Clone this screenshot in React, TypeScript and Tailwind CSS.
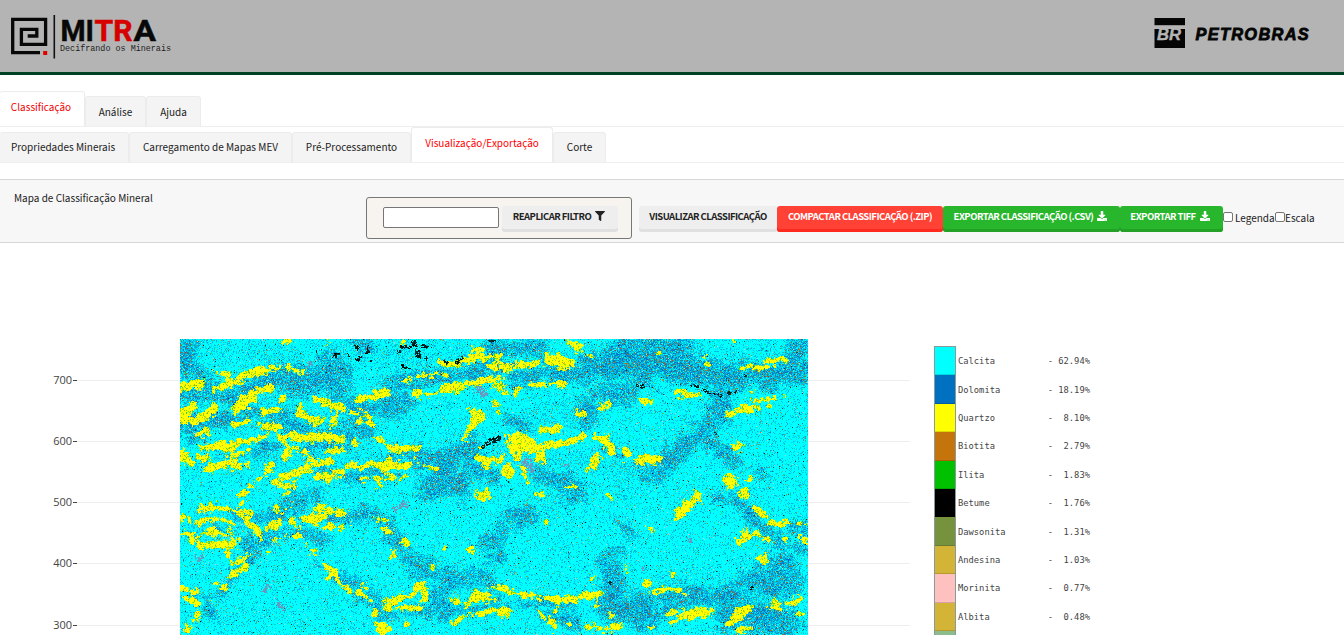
import { useEffect, useRef } from "react";
import type { ReactNode } from "react";
import { FaDownload, FaFilter } from "react-icons/fa";

const MAP_W = 628;
const MAP_H = 296;

/* Strokes are flat x, y, radius triples on a grid three times finer than the map. */
type Stroke = number[];
type Layer = { west: Stroke[]; east: Stroke[] };

const quartz: Layer = {
  west: [
    [545,165,12,600,160,12],[650,130,10,685,127,10],[640,178,6,700,152,11,760,125,12,830,112,9],[860,108,4,905,126,5],
    [710,235,14,745,205,18,775,178,10,815,175,4],[550,250,22,580,225,8],[550,265,14,590,270,12,635,240,14,640,218,6],
    [600,308,8,625,305,6],[775,287,8,835,288,10],[790,245,8,830,242,6],[900,230,10,900,255,5,945,270,11,970,265,6],
    [990,285,5,1005,262,8],[845,205,6],[945,208,9,990,220,9,1040,235,5,1105,258,4],[1075,208,9,1120,200,10,1160,185,9],
    [1070,270,5,1120,285,4],[695,280,6,740,275,9],[840,318,9,900,322,12,960,322,14,1025,322,11],
    [605,350,8,650,350,12,690,350,20,740,330,6,800,320,5],[680,375,8,740,360,6],[545,370,13,565,395,12],[590,382,10,620,380,8],
    [620,415,8,665,405,11,740,398,5],[845,320,6,860,350,6,860,372,12],[880,350,4,925,375,6,920,415,14,880,430,7,830,440,5],
    [810,400,10,805,430,6],[820,455,12,850,472,5,880,465,6,885,440,4,850,440,3],[720,490,8,740,475,2,770,445,2,800,438,2],
    [740,480,2,720,530,1],[865,490,7],[955,440,9,980,440,14,1030,425,7],[930,400,10,1000,390,8],[980,365,8,1025,358,8],
    [1040,405,5,1060,405,14,1080,410,5],[1105,400,10,1160,405,17,1215,405,7,1245,385,3],[1215,385,2,1305,415,2],
    [1170,355,8,1250,350,5],[1060,340,8],[1120,320,6,1140,332,6],[1090,445,5,1140,445,5,1215,440,4],[1135,462,9],
    [1250,190,8,1285,190,5],[1310,185,6,1360,170,14,1420,155,7,1500,145,6],[1210,150,1,1290,132,6,1340,128,4],
    [1320,95,7,1370,100,8,1430,80,12,1500,78,4],[1397,320,7,1415,285,10,1435,260,20,1405,230,4],[1485,170,12],[1490,225,11],
    [1440,345,4],[1430,380,6,1460,395,14,1500,385,9],[1430,485,5,1450,495,17],[860,32,8],[980,35,6],[1215,33,7],
    [1420,60,5,1450,60,4],[605,535,9,650,530,7,700,540,7,745,550,12],[550,560,8,580,580,6,640,560,5,665,570,8],
    [550,612,3,620,600,4,680,615,4],[600,575,2,590,620,2],[690,580,4,695,620,3],[560,600,2,580,635,4],[640,590,3,650,630,4],
    [605,645,11,650,640,14,700,640,15],[680,665,9],[740,580,8,770,600,9,780,625,5],[800,590,6,830,580,14],[830,540,9],
    [875,570,6,890,590,4],[910,565,7,940,565,16,975,560,4],[800,640,3,800,665,3],[820,630,5,860,612,2,900,618,3],
    [905,640,5,940,665,4],[700,700,5,750,675,3],[690,735,7,735,710,10],[650,760,7,670,770,8],[645,810,3],
    [950,530,8,1030,550,5],[980,592,9,1020,590,5],[1050,583,5],[545,775,9,590,785,4],[555,805,8,585,815,12],
    [595,850,6,575,880,5,560,905,7],[965,700,4,1000,725,5,1020,760,7,1045,778,4],[980,740,4,1000,745,3],
    [1070,785,5,1110,805,3],[1090,765,6],[1150,595,6,1175,605,6],[1215,635,10],[1180,675,10],[1295,708,4],[1410,652,7],[1330,650,4],
    [1160,825,14,1180,805,10,1230,800,4,1260,765,12,1275,800,7,1250,830,7,1190,830,4],[1125,845,7],
    [1130,880,6,1145,895,15,1170,895,5],[1220,885,4],[1340,800,2,1400,820,7,1430,800,18,1480,805,6],
    [1420,855,7,1480,840,9],[1355,880,5,1400,855,3],[1490,775,5],[850,540,2,875,515,2],[1120,563,1,1160,572,1],
  ],
  east: [
    [0,110,8,60,115,9,110,100,11,150,95,5],[0,100,2,60,98,2],[170,95,12,210,95,20,240,95,12],[170,75,5,185,95,8],[265,55,12,235,35,6],
    [300,80,7],[0,140,6,30,170,13,40,185,8],[75,185,7,110,165,1,165,160,6,230,158,4],[15,215,8,25,240,5],[265,250,12],
    [335,228,6,355,222,4],[460,212,9,480,210,8],[560,190,8,620,195,4],[715,250,11,750,235,11,800,235,6],[785,185,9],
    [790,215,1,840,205,1,885,200,2],[640,80,6],[648,103,6],[735,32,6],[825,95,6,880,85,6],[750,113,4,800,112,5,870,105,1],
    [505,65,6],[60,325,16,100,320,16,120,345,18,70,350,18],[90,375,12],[150,385,12,155,350,5,190,340,11,235,335,11,285,315,3],
    [150,300,5,200,295,9],[50,425,18],[15,385,8],[110,450,5,95,410,3],[320,320,5,345,325,13,365,360,9],[410,362,12],
    [440,390,7,490,390,11,510,375,4],[310,400,14,320,375,8,290,420,3],[235,470,9],[148,490,7],[400,405,5],[738,350,13],
    [718,452,20],[760,490,15],[780,450,6],[565,550,14,600,515,10,620,495,8,635,520,3],[795,535,5,845,575,7,870,582,3,925,575,5],
    [950,580,5],[760,595,6,755,620,6,800,610,9,845,635,4],[740,635,4,790,620,4],[940,625,9],[885,625,4],[818,685,14],[170,580,6],
    [480,595,5],[410,717,5],[545,730,5],[500,557,4],[0,770,4,50,780,7,100,795,7,145,805,3],[165,805,5,210,805,11,260,805,9,325,785,9],
    [305,745,7],[20,850,7,50,848,15],[150,850,4,180,875,7,195,885,9],[195,840,7],[470,765,12],[480,780,2,560,775,8,590,795,2],
    [535,850,4,575,835,2],[570,860,7,620,845,17,655,845,12],[540,875,3,580,860,4],[360,855,8],[290,890,4,345,898,6,390,882,8],
    [480,893,5],[720,880,7,750,850,17,775,830,7],[740,898,10,780,890,3],[850,815,5,870,835,4,830,830,2],[885,820,5,920,812,10],
    [930,850,5],[320,825,5],[835,230,3],[360,498,3],[220,860,2,235,880,2],
  ],
};

const dolomite: Layer = {
  west: [
    [555,50,26,560,100,26,600,140,16],[600,150,16,700,185,16,800,150,30,900,150,40,1000,150,44],[980,105,30,1010,130,30],
    [545,200,14,680,195,18,760,245,16],[545,290,16,640,270,24,700,270,14],[780,270,12,860,270,25,920,290,18],[1040,215,15,1110,235,24,1200,215,34],
    [1040,290,10,1100,300,22],[1180,160,20,1260,150,18,1350,140,18,1440,120,18,1500,110,26],[930,300,8,1050,310,14],[940,345,10,1020,345,8],
    [1260,380,30,1330,400,42,1390,360,32,1430,420,24],[1290,470,34,1380,460,30],[1480,440,15],[1400,350,24],[840,545,8,900,520,24],[940,490,12],
    [980,560,10,1100,555,13,1160,580,13,1190,640,18,1230,690,22,1290,730,25,1360,750,32,1440,740,24,1490,770,15],
    [1310,790,36,1330,840,22],[1130,850,8,1250,845,10,1400,840,12,1500,820,10],[650,800,6,720,720,7,780,640,13,840,608,8,900,605,9,960,625,12],
    [950,700,3,1060,770,8,1130,820,10],[700,545,6,780,565,8,860,545,6],[740,640,14],[630,850,14],[590,795,6,650,800,7],
    [1470,680,20],[700,390,4,740,370,5,830,335,5],[545,325,6,600,325,6],[960,435,5,1100,430,6,1210,428,5],[1180,375,5,1260,365,8],[870,480,4,880,520,5],
    [1390,120,10,1480,90,10],[640,600,10],[1060,30,5,1100,45,10],
  ],
  east: [
    [0,60,28,60,60,26,150,50,16],[300,110,24,400,90,54,500,90,54,600,110,38,700,140,36,800,140,26,950,120,36],[400,40,24,560,50,30],
    [920,50,32,920,110,26],[60,140,20,150,130,16,280,130,20],[400,190,26,330,190,22,290,220,16,280,270,16],[60,270,15,100,290,10],
    [690,190,24,690,260,24,640,300,22,580,340,26,540,380,24,490,430,20],[650,340,20,700,370,12,750,390,12],
    [130,420,14,200,450,22,270,480,18,240,520,8],[110,560,26,60,550,8],[0,640,26],[30,600,10],[820,440,10],
    [690,500,12,760,520,13,790,580,15,850,610,13,880,650,13],[360,690,24,370,760,32,360,830,40,450,830,36],
    [0,815,5,100,820,8,250,825,6],[480,800,15,700,800,22,750,760,24,800,740,34,880,700,28,900,760,30,850,780,30],
    [700,850,30,780,850,30,900,870,34],[450,870,28,540,840,10],[950,590,13,860,595,8],[170,850,8,260,880,14],[0,450,8],
    [330,360,8,400,385,6,460,405,6],[380,580,4,420,600,2],[770,560,16],[930,650,10],[680,890,14,900,895,14],[40,100,10,280,140,12],
  ],
};

const haze: Layer = {
  west: [[560,60,50,760,60,50,900,90,50],[1000,60,60,1200,80,60,1400,60,50],[560,260,70,800,240,70,1000,260,60,1180,250,40],[600,600,60,750,580,60,880,580,40],[600,400,50,700,380,60,1000,380,60,1200,400,50],[1420,490,60,1330,420,70],[1000,700,40]],
  east: [[0,130,60,250,110,70,450,110,80,900,110,70],[120,270,60,300,240,60],[50,350,60,150,400,60,300,400,60,450,420,50,620,320,50],[60,580,70,200,500,60],[400,470,60],[820,600,60,740,500,40],[360,780,70,800,820,90],[400,600,40]],
};

const grey: Layer = {
  west: [[600,683,10],[927,105,9],[1435,175,9,1448,195,11],[1190,530,8,1212,522,9],[800,765,4,798,785,10],[835,820,5,848,838,7],[675,740,5],[820,750,3],[1150,275,4]],
  east: [[105,395,16,120,420,12],[460,712,7],[593,628,7],[222,403,5]],
};

const bitumen: Layer = {
  west: [
    [1003,77,5,1015,70,3],[1045,70,4],[1068,50,6],[1075,82,5],[1100,48,4,1103,62,5],[1130,42,3],[1193,62,8],[1205,50,4,1230,52,6],[1240,35,9,1250,60,8,1255,75,8],
    [1270,45,9,1282,50,5],[1278,82,4],[1205,110,4,1230,114,4],[1478,32,6],[1330,90,4,1340,95,4],[1370,98,5,1385,82,6],[1445,347,4,1475,330,9,1495,325,9],[950,60,3],[1110,95,3],[1335,120,3],
  ],
  east: [[0,32,7,15,32,4],[0,330,9,25,320,5],[430,168,2,455,170,4],[560,165,2],[600,165,1,630,170,3,655,188,3,690,195,3,745,183,2],[768,137,5],[360,758,3],[785,770,3],[675,312,3]],
};

function hash(x: number, y: number, seed: number) {
  let h = Math.imul(x, 374761393) ^ Math.imul(y, 668265263) ^ Math.imul(seed, 2246822519);
  h = Math.imul(h ^ (h >>> 13), 1274126177);
  h = Math.imul(h ^ (h >>> 15), 2654435761);
  return ((h ^ (h >>> 16)) >>> 0) / 4294967296;
}

function smoothNoise(x: number, y: number, seed: number) {
  const ix = Math.floor(x);
  const iy = Math.floor(y);
  const fx = x - ix;
  const fy = y - iy;
  const u = fx * fx * (3 - 2 * fx);
  const v = fy * fy * (3 - 2 * fy);
  const a = hash(ix, iy, seed) * (1 - u) + hash(ix + 1, iy, seed) * u;
  const b = hash(ix, iy + 1, seed) * (1 - u) + hash(ix + 1, iy + 1, seed) * u;
  return a * (1 - v) + b * v - 0.5;
}

/* Signed depth in pixels inside the layer's strokes; negative outside. */
function depthField(layer: Layer) {
  const field = new Float32Array(MAP_W * MAP_H).fill(-99);
  const strokes: [Stroke, number][] = [
    ...layer.west.map((s): [Stroke, number] => [s, -540]),
    ...layer.east.map((s): [Stroke, number] => [s, 930]),
  ];
  for (const [s, shift] of strokes) {
    for (let i = 0; i < s.length; i += 3) {
      const j = i + 3 < s.length ? i + 3 : i;
      if (j === i && s.length > 3) break;
      const ax = (s[i] + shift) / 3, ay = (s[i + 1] - 27) / 3, ar = s[i + 2] / 3;
      const bx = (s[j] + shift) / 3, by = (s[j + 1] - 27) / 3, br = s[j + 2] / 3;
      const pad = Math.max(ar, br) + 18;
      const dx = bx - ax, dy = by - ay, len = dx * dx + dy * dy || 1;
      const x0 = Math.max(0, Math.floor(Math.min(ax, bx) - pad)), x1 = Math.min(MAP_W - 1, Math.ceil(Math.max(ax, bx) + pad));
      const y0 = Math.max(0, Math.floor(Math.min(ay, by) - pad)), y1 = Math.min(MAP_H - 1, Math.ceil(Math.max(ay, by) + pad));
      for (let y = y0; y <= y1; y++) {
        for (let x = x0; x <= x1; x++) {
          const t = Math.min(1, Math.max(0, ((x - ax) * dx + (y - ay) * dy) / len));
          const d = ar + (br - ar) * t - Math.hypot(x - ax - dx * t, y - ay - dy * t);
          const k = y * MAP_W + x;
          if (d > field[k]) field[k] = d;
        }
      }
    }
  }
  return field;
}

type Rgb = [number, number, number];
const CYAN: Rgb = [0, 255, 255];
const BLUE: Rgb = [0, 112, 192];
const YELLOW: Rgb = [255, 255, 0];
const BROWN: Rgb = [197, 116, 12];
const GREEN: Rgb = [0, 192, 0];
const BLACK: Rgb = [0, 0, 0];
const GREY: Rgb = [122, 140, 184];
const PINK: Rgb = [255, 192, 192];
const OLIVE: Rgb = [118, 146, 60];

function paintMap(ctx: CanvasRenderingContext2D) {
  const q = depthField(quartz);
  const d = depthField(dolomite);
  const hz = depthField(haze);
  const g = depthField(grey);
  const b = depthField(bitumen);
  const image = ctx.createImageData(MAP_W, MAP_H);
  const put = (k: number, base: Rgb, c: Rgb, mix: number) => {
    for (let i = 0; i < 3; i++) image.data[k * 4 + i] = base[i] + (c[i] - base[i]) * mix;
    image.data[k * 4 + 3] = 255;
  };
  for (let y = 0; y < MAP_H; y++) {
    for (let x = 0; x < MAP_W; x++) {
      const k = y * MAP_W + x;
      const n = smoothNoise(x / 6, y / 5, 1) * 4.5 + smoothNoise(x / 3, y / 3, 2) * 5 + smoothNoise(x / 1.4, y / 1.4, 3) * 3.5;
      const wide = smoothNoise(x / 14, y / 10, 4) * 10 + smoothNoise(x / 5, y / 4, 5) * 9;
      const blue = Math.min(1, Math.max(0, (d[k] + wide + 8) / 14));
      const hazy = Math.min(1, Math.max(0, (hz[k] + wide) / 18));
      const r = hash(x, y, 6);
      const r2 = hash(x, y, 7);
      if (b[k] + n * 0.6 > 0.2 && r < 0.8) put(k, CYAN, BLACK, 0.75 + r2 * 0.25);
      else if (q[k] + n > -0.45) {
        const rim = q[k] + n < 0.9 ? 0.14 : 0;
        if (r < 0.8 - rim) put(k, YELLOW, YELLOW, 1);
        else put(k, YELLOW, r < 0.9 ? GREEN : r < 0.94 ? BROWN : r < 0.96 ? CYAN : OLIVE, 0.25 + r2 * 0.5);
      } else if (g[k] + n > 0 && r < 0.78) put(k, CYAN, GREY, 0.75 + r2 * 0.25);
      else {
        const pBlue = 0.18 + hazy * 0.15 + blue * 0.42;
        const pBrown = 0.01 + hazy * 0.015 + blue * 0.085;
        if (r < pBlue) put(k, CYAN, BLUE, 0.15 + r2 * (0.5 + blue * 0.4));
        else if (r < pBlue + pBrown) put(k, blue > 0.4 ? BLUE : CYAN, BROWN, 0.4 + r2 * 0.5);
        else if (r < pBlue + pBrown + 0.01) put(k, CYAN, BLACK, 0.4 + r2 * 0.5);
        else if (r < pBlue + pBrown + 0.018) put(k, CYAN, PINK, 0.7);
        else if (r < pBlue + pBrown + 0.035) put(k, CYAN, GREEN, 0.45);
        else if (blue > 0.4 && r2 > 0.5) put(k, CYAN, BLUE, 0.4);
        else put(k, CYAN, CYAN, 1);
      }
    }
  }
  ctx.putImageData(image, 0, 0);
}

function MineralMap() {
  const ref = useRef<HTMLCanvasElement>(null);
  useEffect(() => {
    const ctx = ref.current?.getContext("2d");
    if (ctx) paintMap(ctx);
  }, []);
  return <canvas ref={ref} width={628} height={296} className="block h-[296px] w-[628px] shrink-0" />;
}

function MitraLogo() {
  return (
    <svg width="170" height="50" viewBox="0 0 170 50" className="block">
      <path d="M29 38.7H1.7V5.3H34.6V30.3H10.4V15.3H25.8V22H16.7" fill="none" stroke="#080808" strokeWidth="3.3" />
      <rect x="32.2" y="37" width="4" height="4" fill="#e00000" />
      <path d="M43.3 1V44.5" stroke="#111" strokeWidth="1.6" />
      <g fontFamily="Roboto" fontWeight="700" fontSize="30" strokeWidth="0.5">
        <text x="49.5" y="27.2" fill="#080808" stroke="#080808" textLength="33.5" lengthAdjust="spacingAndGlyphs">MI</text>
        <text x="83.5" y="27.2" fill="#d60000" stroke="#d60000" textLength="38" lengthAdjust="spacingAndGlyphs">TR</text>
        <text x="122.5" y="27.2" fill="#080808" stroke="#080808" textLength="22.5" lengthAdjust="spacingAndGlyphs">A</text>
      </g>
      <text x="49" y="37.3" fontFamily="Liberation Mono" fontSize="9" fill="#222" textLength="111" lengthAdjust="spacingAndGlyphs">
        Decifrando os Minerais
      </text>
    </svg>
  );
}

function PetrobrasLogo() {
  return (
    <svg width="160" height="32" viewBox="0 0 160 32" className="block">
      <rect x="0.5" y="1" width="30.5" height="7.2" fill="#050505" />
      <rect x="0.5" y="12" width="30.5" height="19" fill="#050505" />
      <text x="3" y="23.2" fontFamily="Liberation Sans" fontWeight="700" fontStyle="italic" fontSize="16" fill="#b4b4b4" stroke="#b4b4b4" strokeWidth="0.4" textLength="24" lengthAdjust="spacingAndGlyphs">BR</text>
      <text x="41.5" y="22.9" fontFamily="Liberation Sans" fontWeight="700" fontStyle="italic" fontSize="16.2" letterSpacing="1.3" fill="#050505" stroke="#050505" strokeWidth="0.8" textLength="114.5" lengthAdjust="spacingAndGlyphs">PETROBRAS</text>
    </svg>
  );
}

function Tab({ children, className }: { children: ReactNode; className: string }) {
  return <div className={`flex shrink-0 items-center justify-center rounded-t-[3px] border border-b-0 border-[#ececec] whitespace-nowrap ${className}`}>{children}</div>;
}

function ActionButton({ children, className }: { children: ReactNode; className: string }) {
  return (
    <button className={`flex h-[26px] shrink-0 items-center justify-center gap-[4px] rounded-[3px] pb-[6px] text-[9.5px] font-bold tracking-[-0.53px] whitespace-nowrap ${className}`}>
      {children}
    </button>
  );
}

const legend: { name: string; share: string; color: string }[] = [
  { name: "Calcita", share: "62.94%", color: "bg-[#00ffff]" },
  { name: "Dolomita", share: "18.19%", color: "bg-[#0070c0]" },
  { name: "Quartzo", share: "8.10%", color: "bg-[#ffff00]" },
  { name: "Biotita", share: "2.79%", color: "bg-[#c5740c]" },
  { name: "Ilita", share: "1.83%", color: "bg-[#00c000]" },
  { name: "Betume", share: "1.76%", color: "bg-[#000000]" },
  { name: "Dawsonita", share: "1.31%", color: "bg-[#76923c]" },
  { name: "Andesina", share: "1.03%", color: "bg-[#d4b436]" },
  { name: "Morinita", share: "0.77%", color: "bg-[#ffc0c0]" },
  { name: "Albita", share: "0.48%", color: "bg-[#d4b436]" },
  { name: "", share: "", color: "bg-[#8cbc8c]" },
];

function AxisLines() {
  return (
    <div className="flex h-full flex-col pt-[41px]">
      {[700, 600, 500, 400, 300].map((tick) => (
        <div key={tick} className="h-[61.13px] shrink-0 border-t border-[#eee]" />
      ))}
    </div>
  );
}

export default function App() {
  return (
    <div className="flex h-[635px] w-full flex-col overflow-hidden bg-white font-['Noto_Sans_CJK_SC','Noto_Sans',sans-serif] text-[10px] leading-4 tracking-normal text-[#222]">
      <header className="flex h-[75px] shrink-0 items-start justify-between border-b-[3px] border-[#004225] bg-[#b4b4b4] pr-[30px] pl-[11px]">
        <div className="pt-[14px]"><MitraLogo /></div>
        <div className="pt-[17px]"><PetrobrasLogo /></div>
      </header>

      <nav className="flex h-[52px] shrink-0 items-end border-b border-[#eee]">
        <Tab className="h-[35px] w-[85px] border-l-0 bg-white pr-[2px] pb-[5px] text-[#f00000]">Classificação</Tab>
        <Tab className="h-[30px] w-[61px] bg-[#f4f4f4]">Análise</Tab>
        <Tab className="h-[30px] w-[55px] bg-[#f4f4f4]">Ajuda</Tab>
      </nav>
      <nav className="flex h-[36px] shrink-0 items-end border-b border-[#eee]">
        <Tab className="h-[30px] w-[129px] border-l-0 bg-[#f4f4f4] pr-[2px] pb-px">Propriedades Minerais</Tab>
        <Tab className="h-[30px] w-[163px] bg-[#f4f4f4] pb-px">Carregamento de Mapas MEV</Tab>
        <Tab className="h-[30px] w-[119px] bg-[#f4f4f4] pb-px">Pré-Processamento</Tab>
        <Tab className="h-[35px] w-[142px] bg-white pb-[4px] text-[#ff0000]">Visualização/Exportação</Tab>
        <Tab className="h-[30px] w-[53px] bg-[#f4f4f4] pb-px">Corte</Tab>
      </nav>

      <section className="mt-4 flex h-[64px] shrink-0 items-start border-y border-[#d8d8d8] bg-[#f7f7f7]">
        <h1 className="w-[366px] shrink-0 pt-[10px] pl-[14px]">Mapa de Classificação Mineral</h1>
        <div className="mt-[17px] mr-[7px] flex h-[42px] w-[266px] shrink-0 gap-[3px] rounded-[3px] border border-[#777] bg-[#f7f4ef] pt-2 pl-4">
          <input className="mt-px h-[21px] w-[116px] rounded-[2px] border border-[#767676] bg-white" />
          <ActionButton className="w-[116px] bg-[#eee] pr-[2px] text-[#222] shadow-[inset_0_-3px_0_#e0e0e0]">REAPLICAR FILTRO <FaFilter size={10} /></ActionButton>
        </div>
        <div className="flex items-start pt-[26px]">
          <ActionButton className="w-[138px] bg-[#eee] text-[#222] shadow-[inset_0_-3px_0_#e0e0e0]">VISUALIZAR CLASSIFICAÇÃO</ActionButton>
          <ActionButton className="w-[166px] bg-[#ff4136] text-white shadow-[inset_0_-3px_0_#ff2a1f]">COMPACTAR CLASSIFICAÇÃO (.ZIP)</ActionButton>
          <ActionButton className="w-[177px] bg-[#28b62c] pr-[2px] text-white shadow-[inset_0_-3px_0_#23a127]">EXPORTAR CLASSIFICAÇÃO (.CSV) <FaDownload size={10} /></ActionButton>
          <ActionButton className="w-[103px] bg-[#28b62c] pr-[3px] text-white shadow-[inset_0_-3px_0_#23a127]">EXPORTAR TIFF <FaDownload size={10} /></ActionButton>
          <label className="flex items-start pt-1">
            <span className="mt-[2px] size-[10px] rounded-[2px] border border-[#767676] bg-white" />
            <span className="w-[42px] pl-[2px]">Legenda</span>
          </label>
          <label className="flex items-start pt-1">
            <span className="mt-[2px] size-[10px] rounded-[2px] border border-[#767676] bg-white" />
            <span>Escala</span>
          </label>
        </div>
      </section>

      <main className="flex h-[392px] shrink-0 items-start pt-[96px]">
        <div className="flex w-[77px] shrink-0 flex-col pt-[11px] font-['Open_Sans',sans-serif] text-[11px] tracking-normal text-[#444]">
          {[700, 600, 500, 400, 300].map((tick) => (
            <div key={tick} className="flex h-[61.13px] shrink-0 items-start justify-end">
              <span className="mt-[22px]">{tick}</span>
              <span className="mt-[30px] ml-px h-px w-1 bg-[#444]" />
            </div>
          ))}
        </div>
        <div className="h-[296px] w-[103px] shrink-0"><AxisLines /></div>
        <MineralMap />
        <div className="h-[296px] w-[102px] shrink-0"><AxisLines /></div>
        <div className="mt-[7px] ml-6 flex h-[320px] w-[22px] shrink-0 flex-col border-[1.5px] border-[#8a9a9a]">
          {legend.map((m, i) => <div key={i} className={`h-[28.4px] shrink-0 border-b border-black/15 ${m.color}`} />)}
        </div>
        <div className="mt-[8px] ml-[2px] flex flex-col font-['DejaVu_Sans_Mono',monospace] text-[8.77px] tracking-normal text-[#444]">
          {legend.map((m, i) => (
            <div key={i} className="flex h-[28.4px] shrink-0 items-center whitespace-pre">{m.name ? `${m.name.padEnd(17)}- ${m.share.padStart(6)}` : ""}</div>
          ))}
        </div>
      </main>
    </div>
  );
}
